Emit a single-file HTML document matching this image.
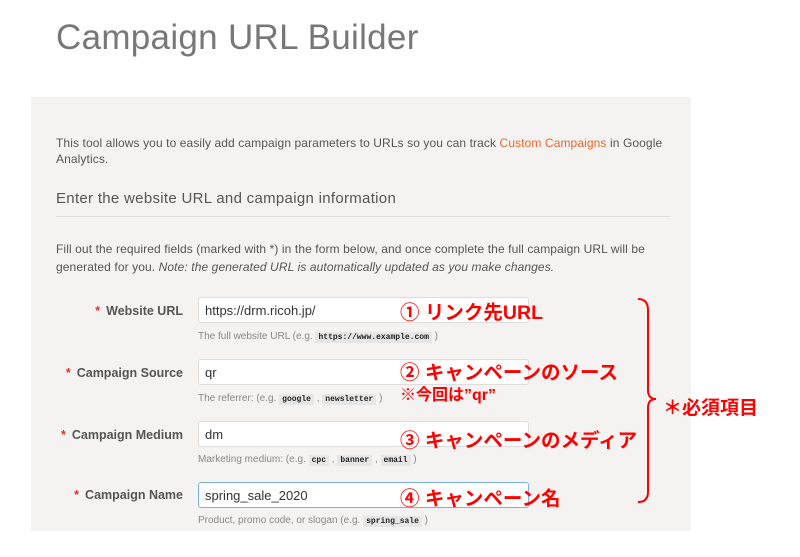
<!DOCTYPE html>
<html><head><meta charset="utf-8"><style>
body{margin:0;width:800px;height:557px;background:#fff;position:relative;overflow:hidden;font-family:"Liberation Sans","Noto Sans CJK JP",sans-serif;}
.a{position:absolute;white-space:nowrap}
h1{position:absolute;left:56px;top:18px;margin:0;font-weight:300;font-size:35px;color:#777;letter-spacing:0.3px}
.panel{position:absolute;left:31px;top:97px;width:660px;height:434px;background:#f4f3f2}
.t{font-size:12px;color:#555;letter-spacing:0.1px}
.lbl{font-size:12.5px;color:#555;font-weight:bold;text-align:right;width:153px;left:30px}
.lbl b{color:#d33;margin-right:6px}
.in{position:absolute;left:198px;width:331px;height:26px;background:#fff;border:1px solid #ddd;border-radius:3px;box-sizing:border-box;font-size:13px;color:#333;padding:5px 6px}
.hint{font-size:10px;color:#888;left:198px}
code{font-family:"Liberation Mono",monospace;font-size:8px;background:#e6e6e6;color:#222;padding:1px 3px;font-weight:bold}
.r{color:#f00;font-weight:bold;font-size:19.5px;font-family:"Liberation Sans","Noto Sans CJK JP",sans-serif}
</style></head><body>
<h1>Campaign URL Builder</h1>
<div class="panel"></div>
<div class="a t" style="left:56px;top:135px;line-height:16px">This tool allows you to easily add campaign parameters to URLs so you can track <span style="color:#e8672b">Custom Campaigns</span> in Google<br>Analytics.</div>
<div class="a" style="left:56px;top:190px;font-size:15px;color:#555;letter-spacing:0.3px">Enter the website URL and campaign information</div>
<div class="a" style="left:56px;top:216px;width:614px;height:1px;background:#ddd"></div>
<div class="a t" style="left:56px;top:240px;line-height:18px">Fill out the required fields (marked with *) in the form below, and once complete the full campaign URL will be<br>generated for you. <i>Note: the generated URL is automatically updated as you make changes.</i></div>

<div class="a lbl" style="top:304px"><b>*</b>Website URL</div>
<div class="in" style="top:297px">https://drm.ricoh.jp/</div>
<div class="a hint" style="top:331px">The full website URL (e.g. <code>https://www.example.com</code> )</div>

<div class="a lbl" style="top:366px"><b>*</b>Campaign Source</div>
<div class="in" style="top:359px">qr</div>
<div class="a hint" style="top:393px">The referrer: (e.g. <code>google</code> , <code>newsletter</code> )</div>

<div class="a lbl" style="top:428px"><b>*</b>Campaign Medium</div>
<div class="in" style="top:421px">dm</div>
<div class="a hint" style="top:454px">Marketing medium: (e.g. <code>cpc</code> , <code>banner</code> , <code>email</code> )</div>

<div class="a lbl" style="top:488px"><b>*</b>Campaign Name</div>
<div class="in" style="top:482px;border-color:#7ab0e8">spring_sale_2020</div>
<div class="a hint" style="top:515px">Product, promo code, or slogan (e.g. <code>spring_sale</code> )</div>

<div class="a r" style="left:400px;top:296px">① リンク先URL</div>
<div class="a r" style="left:400px;top:356px">② キャンペーンのソース</div>
<div class="a r" style="left:400px;top:381px;font-size:16px">※今回は”qr”</div>
<div class="a r" style="left:400px;top:424px">③ キャンペーンのメディア</div>
<div class="a r" style="left:400px;top:482px">④ キャンペーン名</div>
<svg class="a" style="left:636px;top:296px" width="30" height="210"><path d="M2 3 Q12 3 12 14 L12 94 Q12 103 20 103 Q12 103 12 112 L12 196 Q12 206 2 206" fill="none" stroke="#f00" stroke-width="2"/></svg>
<div class="a r" style="left:663px;top:393px;font-size:19px">＊必須項目</div>
</body></html>
